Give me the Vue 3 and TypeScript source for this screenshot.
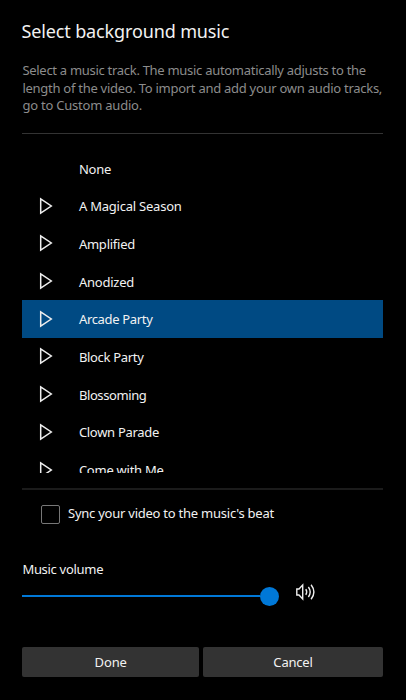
<script setup lang="ts">
import { ref } from 'vue'

interface Track {
  name: string
  spacing: string
}

const tracks: Track[] = [
  { name: 'None', spacing: '-0.2px' },
  { name: 'A Magical Season', spacing: '-0.22px' },
  { name: 'Amplified', spacing: '-0.24px' },
  { name: 'Anodized', spacing: '-0.22px' },
  { name: 'Arcade Party', spacing: '-0.32px' },
  { name: 'Block Party', spacing: '-0.32px' },
  { name: 'Blossoming', spacing: '-0.4px' },
  { name: 'Clown Parade', spacing: '-0.3px' },
  { name: 'Come with Me', spacing: '-0.25px' },
]
const selected = ref('Arcade Party')
const synced = ref(false)
</script>

<template>
  <main class="panel">
    <h1 class="title">Select background music</h1>
    <p class="intro">
      <span class="l1">Select a music track. The music automatically adjusts to the</span>
      <span class="l2">length of the video. To import and add your own audio tracks,</span>
      <span class="l3">go to Custom audio.</span>
    </p>
    <ul class="tracks">
      <li
        v-for="track in tracks"
        :key="track.name"
        class="track"
        :class="{ selected: track.name === selected }"
        @click="selected = track.name"
      >
        <span class="play">
          <svg v-if="track.name !== 'None'" width="14" height="18" viewBox="0 0 14 18">
            <path d="M1.7 1.8V16.2L12.3 9Z" />
          </svg>
        </span>
        <span class="name" :style="{ letterSpacing: track.spacing }">{{ track.name }}</span>
      </li>
    </ul>
    <div class="sync" @click="synced = !synced">
      <span class="box" :class="{ checked: synced }"></span>
      <span class="sync-label">Sync your video to the music's beat</span>
    </div>
    <div class="volume-label">Music volume</div>
    <div class="volume">
      <div class="slider">
        <span class="rail"></span>
        <span class="thumb"></span>
      </div>
      <svg class="speaker" width="22" height="20" viewBox="0 0 22 20">
        <path d="M1.8 7H4L7.7 3.1V16.9L4 13H1.8Z" />
        <path d="M10.8 7.2Q12.6 10 10.8 12.8" />
        <path d="M13.4 5Q17 10 13.4 15" />
        <path d="M16.1 2.7Q21.7 10 16.1 17.3" />
      </svg>
    </div>
    <div class="actions">
      <button class="done">Done</button>
      <button class="cancel">Cancel</button>
    </div>
  </main>
</template>

<style>
body {
  background: #000;
}
</style>

<style scoped>
.panel {
  box-sizing: border-box;
  width: 406px;
  height: 700px;
  padding: 18px 23px 0 22.4px;
  overflow: hidden;
  background: #000;
  color: #f2f2f2;
  font: 13px/18px 'Noto Sans', 'Open Sans', sans-serif;
  display: flex;
  flex-direction: column;
}
.title {
  margin: 0 0 0 -1px;
  font-size: 18px;
  font-weight: 400;
  line-height: 26px;
  letter-spacing: -0.13px;
  white-space: nowrap;
}
.intro {
  margin: 18px 0 0;
  height: 71px;
  border-bottom: 1px solid #333;
  color: #8c8c8c;
  line-height: 17.5px;
  white-space: nowrap;
}
.intro span {
  display: block;
}
.l1 {
  letter-spacing: -0.29px;
}
.l2 {
  letter-spacing: -0.27px;
}
.l3 {
  letter-spacing: -0.22px;
}
.tracks {
  list-style: none;
  margin: 15.3px 0 0;
  padding: 0;
  height: 324px;
  overflow: hidden;
}
.track {
  display: flex;
  align-items: center;
  height: 37.68px;
}
.selected {
  background: #004a83;
}
.play {
  width: 56.5px;
  height: 18px;
  box-sizing: border-box;
  padding-left: 16.8px;
}
.play svg {
  display: block;
  fill: none;
  stroke: #eee;
  stroke-width: 1.5;
}
.name {
  white-space: nowrap;
  padding-top: 1px;
}
.sync {
  margin-top: 15px;
  border-top: 2px solid #1b1b1b;
  display: flex;
  align-items: center;
  height: 48px;
  padding-left: 18.6px;
}
.box {
  box-sizing: border-box;
  width: 19px;
  height: 19px;
  border: 1px solid #777;
  border-radius: 2px;
  margin-right: 8px;
}
.checked {
  background: #0078d7;
}
.sync-label {
  padding-bottom: 2px;
  letter-spacing: -0.24px;
}
.volume-label {
  margin-top: 22px;
  letter-spacing: -0.3px;
}
.volume {
  display: flex;
  height: 20px;
  margin-top: 8px;
}
.slider {
  display: flex;
  align-items: center;
  width: 256.9px;
}
.rail {
  flex: 1;
  height: 2px;
  background: #0078d7;
}
.thumb {
  width: 19px;
  height: 19px;
  border-radius: 50%;
  background: #0078d7;
}
.speaker {
  margin: -4px 0 0 16px;
  fill: none;
  stroke: #eee;
  stroke-width: 1.4;
}
.actions {
  display: flex;
  gap: 4px;
  margin-top: 41px;
}
button {
  height: 30px;
  padding: 0;
  border: 0;
  border-radius: 2px;
  background: #333;
  color: #f2f2f2;
  font: inherit;
  letter-spacing: -0.1px;
}
.done {
  flex: 176.6;
}
.cancel {
  flex: 180;
  letter-spacing: -0.2px;
}
</style>
